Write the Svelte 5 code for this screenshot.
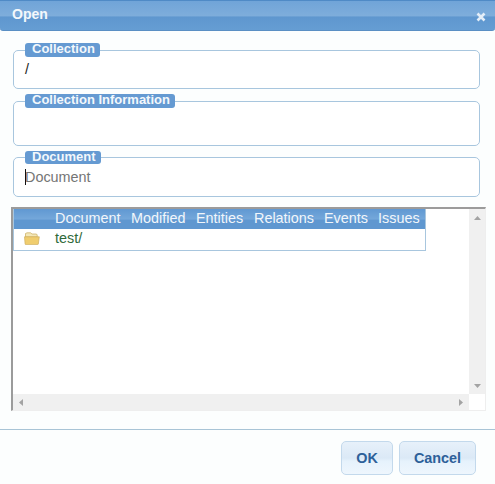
<script>
  const columns = [
    { label: 'Document', width: 76 },
    { label: 'Modified', width: 65 },
    { label: 'Entities', width: 58 },
    { label: 'Relations', width: 70 },
    { label: 'Events', width: 54 },
    { label: 'Issues', width: 48 },
  ]
</script>

<div class="dialog">
  <header class="titlebar">
    <span class="title">Open</span>
    <svg class="close" width="10" height="10" viewBox="0 0 10 10" aria-hidden="true">
      <path d="M1.5 1.5 8.5 8.5M8.5 1.5 1.5 8.5" stroke="#e4eef8" stroke-width="2.6" />
    </svg>
  </header>

  <div class="content">
    <fieldset class="group collection">
      <legend>Collection</legend>
      <div class="value">/</div>
    </fieldset>
    <fieldset class="group info">
      <legend>Collection Information</legend>
    </fieldset>
    <fieldset class="group document">
      <legend>Document</legend>
      <div class="value placeholder"><i class="caret"></i>Document</div>
    </fieldset>

    <div class="browser">
      <div class="viewport">
        <div class="table">
          <div class="thead">
            <span class="icon-col"></span>
            {#each columns as col}
              <span class="th" style="width: {col.width}px">{col.label}</span>
            {/each}
          </div>
          <div class="row">
            <span class="icon-col">
              <svg width="16" height="13" viewBox="0 0 16 13" aria-hidden="true">
                <path d="M1.5 3V1.5L3 .8h3.5L8 2h4.5l.7 1v2H1.5z" fill="#f3e7b8" stroke="#c9ab5c" stroke-width=".7" />
                <path d="M.5 4.8h14.8l-1 7.2q-.1.6-.8.6H1.8q-.6 0-.7-.6z" fill="#f0cd6e" stroke="#cfae5e" stroke-width=".7" />
              </svg>
            </span>
            <span class="name">test/</span>
          </div>
        </div>
      </div>
      <div class="vbar">
        <svg width="9" height="6" viewBox="0 0 9 6" aria-hidden="true"><path d="M4.5 1 8 5H1z" fill="#a3a3a3" /></svg>
        <svg width="9" height="6" viewBox="0 0 9 6" aria-hidden="true"><path d="M4.5 5 8 1H1z" fill="#a3a3a3" /></svg>
      </div>
      <div class="hbar">
        <svg width="6" height="9" viewBox="0 0 6 9" aria-hidden="true"><path d="M1 4.5 5 1v7z" fill="#a3a3a3" /></svg>
        <svg width="6" height="9" viewBox="0 0 6 9" aria-hidden="true"><path d="M5 4.5 1 1v7z" fill="#a3a3a3" /></svg>
      </div>
      <div class="corner"></div>
    </div>
  </div>

  <footer class="buttons">
    <button type="button" class="ok">OK</button>
    <button type="button" class="cancel">Cancel</button>
  </footer>
</div>

<style>
  :global(body) {
    margin: 0;
    background: #fcfefe;
  }

  .dialog {
    box-sizing: border-box;
    width: 495px;
    height: 484px;
    display: flex;
    flex-direction: column;
    overflow: hidden;
    background: #fcfefe;
    font-family: "Liberation Sans", Arial, sans-serif;
    font-size: 14.4px;
  }

  .titlebar {
    box-sizing: border-box;
    height: 31px;
    flex-shrink: 0;
    display: flex;
    align-items: center;
    justify-content: space-between;
    padding: 0 9px 4px 12px;
    border-top: 1px solid #4f8ac6;
    border-bottom: 1px solid #5a8fc4;
    border-radius: 0 0 3px 3px;
    background: linear-gradient(#70a4d8 0, #7eaddb 50%, #5f97cf 56%, #659dd3 100%);
  }

  .title {
    color: #f3f8fc;
    font-size: 14px;
    font-weight: 700;
  }

  .close {
    margin-top: 6px;
  }

  .content {
    flex: 1;
    display: flex;
    flex-direction: column;
    padding: 12px 9px 0 11px;
  }

  .group {
    box-sizing: border-box;
    margin: 0 6px 0 2px;
    padding: 0 11px;
    min-width: 0;
    background: #fff;
    border: 1px solid #a8c6de;
    border-radius: 5px;
  }

  .group legend {
    padding: 0 5px 0 7px;
    height: 14px;
    line-height: 12px;
    color: #f3f8fc;
    font-size: 13px;
    font-weight: 700;
    background: #659ad2;
    border-radius: 3px;
  }

  .collection { height: 46px; }
  .info { height: 52px; margin-top: 5px; }
  .document { height: 46px; margin-top: 5px; }

  .document legend {
    height: 13px;
  }

  .value {
    height: 22px;
    line-height: 20px;
    margin-top: 2px;
    color: #222;
  }

  .placeholder {
    position: relative;
    margin-top: 3px;
    color: #757575;
  }

  .caret {
    position: absolute;
    left: 0;
    top: 2px;
    width: 1px;
    height: 16px;
    background: #111;
  }

  .browser {
    box-sizing: border-box;
    height: 204px;
    margin-top: 10px;
    display: grid;
    grid-template-columns: 1fr 16px;
    grid-template-rows: 1fr 16px;
    background: #fff;
    border-top: 2px solid #9b9b9b;
    border-left: 2px solid #9b9b9b;
    border-right: 1px solid #eee;
    border-bottom: 1px solid #eee;
  }

  .viewport {
    overflow: hidden;
  }

  .table {
    box-sizing: border-box;
    width: 413px;
    border: 1px solid #a8c6de;
    border-top: 0;
    color: #f1f6fb;
  }

  .thead {
    box-sizing: border-box;
    height: 20px;
    padding-bottom: 3px;
    display: flex;
    align-items: center;
    background: linear-gradient(#6098d2 0, #74a7da 50%, #5f97d0 56%, #5f97d0 100%);
  }

  .icon-col {
    flex: 0 0 41px;
    display: flex;
    padding-left: 10px;
    box-sizing: border-box;
  }

  .th {
    flex-shrink: 0;
    white-space: nowrap;
  }

  .row {
    height: 21px;
    display: flex;
    align-items: center;
    background: #fff;
  }

  .name {
    margin-top: -3px;
    color: #2f6a3a;
  }

  .row .icon-col {
    margin-top: -3px;
  }

  .vbar {
    display: flex;
    flex-direction: column;
    justify-content: space-between;
    align-items: center;
    padding: 6px 0 5px;
    background: #f0f0f0;
  }

  .hbar {
    display: flex;
    justify-content: space-between;
    align-items: center;
    padding: 0 5px;
    background: #f0f0f0;
  }

  .corner {
    background: #fff;
  }

  .buttons {
    box-sizing: border-box;
    height: 55px;
    flex-shrink: 0;
    display: flex;
    justify-content: flex-end;
    gap: 6px;
    padding: 11px 19px 0 0;
    border-top: 1px solid #a8c4d6;
  }

  .buttons button {
    box-sizing: border-box;
    height: 34px;
    padding: 0;
    border: 1px solid #c3d9ec;
    border-radius: 5px;
    background: linear-gradient(#e7f1fa 0, #dbe9f6 50%, #e6f2fc 60%, #eef6fd 100%);
    color: #2d6099;
    font: 700 14.4px "Liberation Sans", Arial, sans-serif;
  }

  .ok { width: 52px; }
  .cancel { width: 77px; }
</style>
